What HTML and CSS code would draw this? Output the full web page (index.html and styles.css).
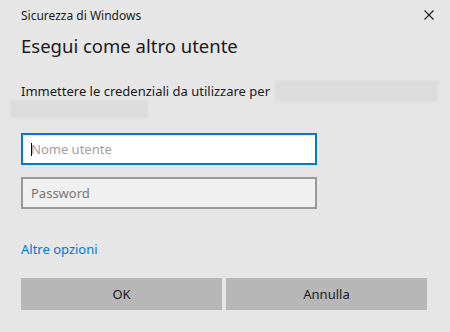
FILE: index.html
```html
<!DOCTYPE html>
<html lang="it">
<head>
    <meta charset="UTF-8">
    <title>Sicurezza di Windows</title>
    <link rel="stylesheet" href="styles.css">
</head>
<body>

<div class="dialog">
    <div class="caption">
        <span class="caption-title">Sicurezza di Windows</span>
        <svg class="close" width="10" height="10" viewBox="0 0 10 10">
            <path d="M0.5 0.5 L9.5 9.5 M9.5 0.5 L0.5 9.5" stroke="#1a1a1a" stroke-width="1.1" fill="none"/>
        </svg>
    </div>

    <h1>Esegui come altro utente</h1>

    <p class="prompt"><span class="prompt-text">Immettere le credenziali da utilizzare per</span> <span class="blur blur-a"></span></p>
    <div class="blur blur-b"></div>

    <div class="field focused">
        <span class="caret"></span>
        <span class="placeholder">Nome utente</span>
    </div>
    <div class="field">
        <span class="placeholder">Password</span>
    </div>

    <a class="more" href="#">Altre opzioni</a>

    <div class="buttons">
        <button>OK</button>
        <button>Annulla</button>
    </div>
</div>

</body>
</html>
```

FILE: styles.css
```css
html, body {
    margin: 0;
    background: #e6e6e6;
}
body {
    font-family: "Noto Sans", "Open Sans", sans-serif;
    color: #1a1a1a;
}
.dialog {
    width: 450px;
    height: 332px;
    box-sizing: border-box;
    padding: 0 23px 0 21px;
}
.caption {
    display: flex;
    justify-content: space-between;
    align-items: center;
    height: 32px;
}
.caption-title {
    font-size: 12px;
    margin-top: -2px;
}
.close {
    margin-right: -7px;
    margin-top: -2px;
}
h1 {
    font-size: 18.5px;
    font-weight: normal;
    margin: 0;
    height: 44px;
    line-height: 28px;
}
.prompt {
    font-size: 13px;
    margin: 4px 0 0;
    display: flex;
    align-items: center;
    height: 22px;
}
.prompt-text {
    white-space: nowrap;
}
.blur {
    display: block;
    background: #dcdcdc;
    filter: blur(1px);
}
.blur-a {
    width: 163px;
    height: 22px;
    margin-left: auto;
    margin-right: -11px;
    flex-shrink: 0;
}
.blur-b {
    width: 138px;
    height: 18px;
    margin-left: -11px;
    margin-top: -2px;
    margin-bottom: 15px;
}
.field {
    width: 296px;
    height: 32px;
    box-sizing: border-box;
    border: 2px solid #999;
    background: #f0f0f0;
    display: flex;
    align-items: center;
    padding-left: 8px;
    margin-bottom: 12px;
    font-size: 13px;
}
.field.focused {
    border-color: #0078d7;
    background: #fff;
}
.caret {
    width: 1px;
    height: 13px;
    background: #000;
    margin-right: -1px;
}
.placeholder {
    color: #767676;
}
.field.focused .placeholder {
    color: #a0a0a0;
}
.more {
    display: block;
    margin-top: 31px;
    font-size: 13px;
    line-height: 18px;
    color: #0078d7;
    text-decoration: none;
    height: 38px;
}
.buttons {
    display: flex;
    gap: 4px;
}
.buttons button {
    flex: 1;
    height: 32px;
    border: none;
    background: #b7b7b7;
    font-family: inherit;
    font-size: 13px;
    color: #1a1a1a;
    padding: 0;
}
```
